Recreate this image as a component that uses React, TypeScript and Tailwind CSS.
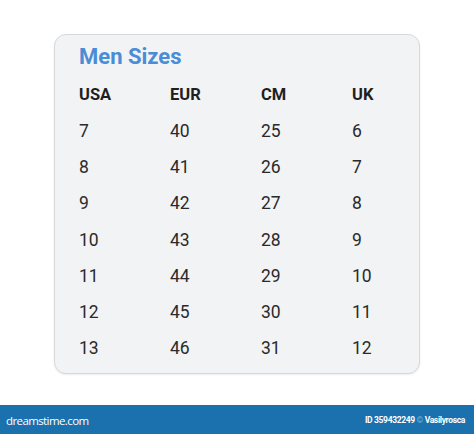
import React from "react";

const rows = [
  ["7", "40", "25", "6"],
  ["8", "41", "26", "7"],
  ["9", "42", "27", "8"],
  ["10", "43", "28", "9"],
  ["11", "44", "29", "10"],
  ["12", "45", "30", "11"],
  ["13", "46", "31", "12"],
];

export default function App() {
  return (
    <div className="w-[474px] h-[434px] bg-white flex flex-col overflow-hidden" style={{ fontFamily: "Roboto, 'Liberation Sans', sans-serif" }}>
      <div className="pt-[34px] pl-[54px] h-[405px]">
        <div className="w-[366px] h-[340px] rounded-[12px] border border-[#d6d8db] bg-[#f2f3f5] pl-[24px] pt-[9px] shadow-[0_1px_2px_rgba(0,0,0,0.08)]">
          <div className="text-[22px] leading-[26px] font-bold text-[#4a8cd6]">Men Sizes</div>
          <div className="mt-[7px] grid grid-cols-[91px_91px_91px_91px]">
            {["USA", "EUR", "CM", "UK"].map((h) => (
              <div key={h} className="h-[36px] leading-[36px] text-[16.5px] font-bold text-[#1f1f1f]">{h}</div>
            ))}
            {rows.map((r, i) =>
              r.map((c, j) => (
                <div key={i + "-" + j} className="h-[36.2px] leading-[36.2px] text-[17.5px] text-[#2a2a2a]">{c}</div>
              ))
            )}
          </div>
        </div>
      </div>
      <div className="h-[29px] bg-[#1b71ad] flex items-center justify-between pl-[6px] pr-[9px]">
        <span className="text-white text-[11.5px] font-medium tracking-[-0.6px] pt-[3px]" style={{ fontFamily: "'Open Sans', sans-serif" }}>dreamstime.com</span>
        <span className="text-white text-[8.5px] font-bold tracking-[-0.35px] pt-[1px]">ID 359432249 <span className="text-[#7fb0d6]">©</span> Vasilyrosca</span>
      </div>
    </div>
  );
}
